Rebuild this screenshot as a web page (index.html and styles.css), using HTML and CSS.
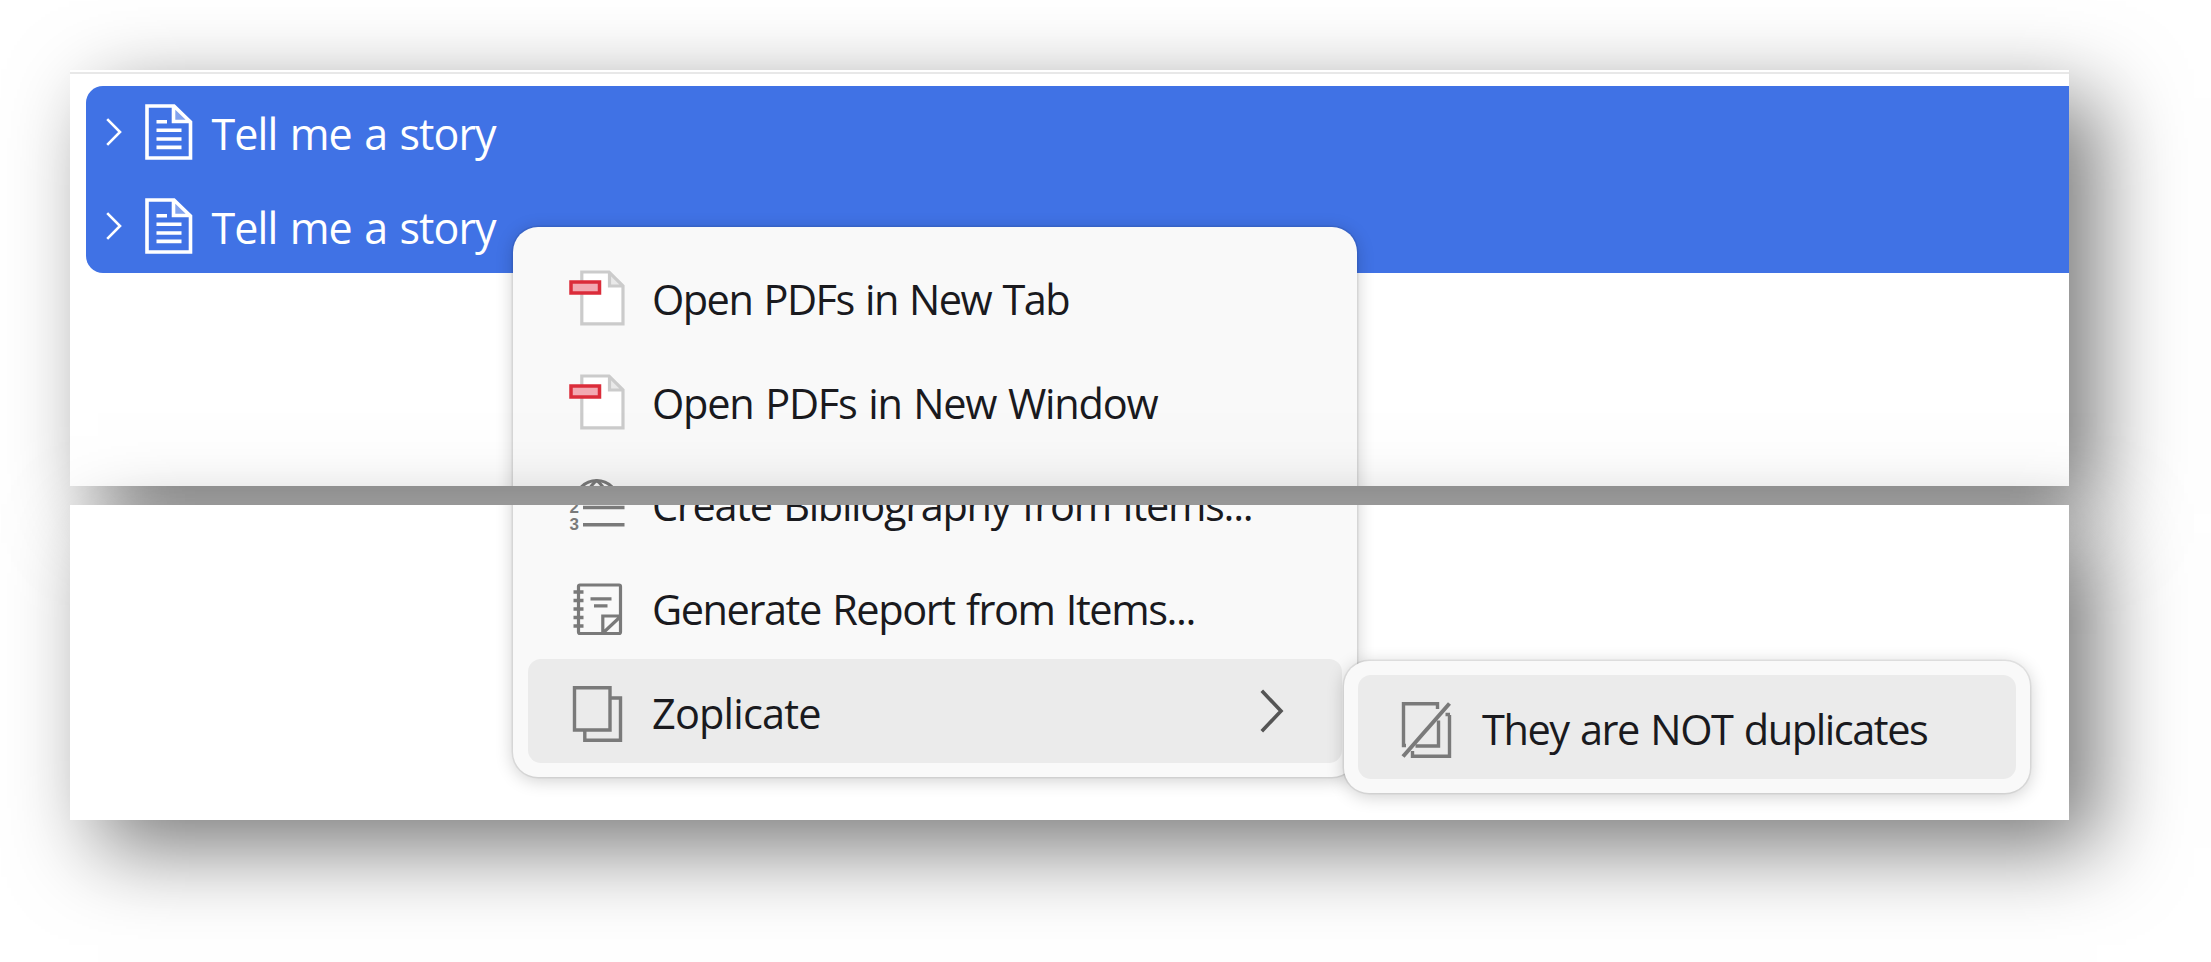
FILE: index.html
```html
<!DOCTYPE html>
<html lang="en">
<head>
<meta charset="utf-8">
<title>Zoplicate menu</title>
<link rel="stylesheet" href="styles.css">
</head>
<body>
<svg class="defs" aria-hidden="true">
  <symbol id="doc" viewBox="0 0 48 56">
    <path d="M28 2 L28 17.500 H45.500 Z" fill="#fff" fill-opacity=".35"/>
    <path d="M2 2 H29 L45.500 18 V54 H2 Z M28.500 2 V17.500 H45" fill="none" stroke="#fff" stroke-width="3.600"/>
    <path d="M11.500 17.800 H22 M11.500 26.200 H36.500 M11.500 35 H36.500 M11.500 43.400 H36.500" stroke="#fff" stroke-width="3.600"/>
  </symbol>
  <symbol id="twisty" viewBox="0 0 16 28">
    <path d="M1.200 1.200 L14 14 L1.200 26.800" fill="none" stroke="#fff" stroke-width="2.600"/>
  </symbol>
  <symbol id="pdf" viewBox="0 0 56 56">
    <path d="M12.800 2 H40 L54 15.800 V53.800 H12.800 Z" fill="#fff"/>
    <path d="M40 2 V16 H54 Z" fill="#e9e9e9"/>
    <path d="M12.800 2 H40 L54 15.800 V53.800 H12.800 Z M40.500 2 V16 H54" fill="none" stroke="#cbcbcb" stroke-width="3.200"/>
    <rect x="2" y="12" width="28.500" height="11" fill="#f2a9b2" stroke="#db2c3a" stroke-width="3.500"/>
  </symbol>
</svg>

<main class="shots">
  <section class="panel panel-top">
    <div class="selection">
      <div class="entry"><svg class="twisty"><use href="#twisty"/></svg><svg class="doc"><use href="#doc"/></svg><span class="label t-story">Tell me a story</span></div>
      <div class="entry"><svg class="twisty"><use href="#twisty"/></svg><svg class="doc"><use href="#doc"/></svg><span class="label t-story">Tell me a story</span></div>
    </div>
    <div class="menu menu-upper">
      <div class="item"><svg class="icon"><use href="#pdf"/></svg><span class="label t-tab">Open PDFs in New Tab</span></div>
      <div class="item"><svg class="icon"><use href="#pdf"/></svg><span class="label t-window">Open PDFs in New Window</span></div>
      <div class="item">
        <svg class="icon icon-bib" viewBox="0 0 56 56" fill="none" stroke="#7a7a7a" stroke-width="3.200">
          <circle cx="27.700" cy="25" r="21.500"/>
          <path d="M27.700 3.500 C20 9 18 17 18 25 M27.700 3.500 C35.500 9 37.500 17 37.500 25"/>
        </svg>
      </div>
    </div>
  </section>
  <section class="panel panel-bottom">
    <div class="menu menu-lower">
      <div class="item">
        <svg class="icon icon-list" viewBox="0 0 56 56">
          <path d="M14 30.500 H55.500 M14 47.800 H55.500" stroke="#7a7a7a" stroke-width="3.500"/>
          <text x="0.500" y="35.500" class="num">2</text>
          <text x="0.500" y="52.800" class="num">3</text>
        </svg>
        <span class="label t-bib">Create Bibliography from Items...</span>
      </div>
      <div class="item">
        <svg class="icon icon-report" viewBox="0 0 56 56" fill="none" stroke="#7a7a7a" stroke-width="3.200">
          <rect x="9.500" y="4" width="42" height="48.500" rx="1.500"/>
          <path d="M21.500 17.800 H42.500 M25 24.800 H38.500"/>
          <path d="M33.800 52 V35 H51 M34.500 51.500 L51 36"/>
          <path d="M4.500 11 H14.500 M4.500 19.500 H14.500 M4.500 28 H14.500 M4.500 36.500 H14.500 M4.500 45 H14.500" stroke-width="3.400"/>
        </svg>
        <span class="label t-report">Generate Report from Items...</span>
      </div>
      <div class="item active">
        <svg class="icon" viewBox="0 0 56 56">
          <path d="M5.500 1.800 H41 V44 H5.500 Z M41 12 H51.500 V54.200 H15.800 V44" fill="none" stroke="#7a7a7a" stroke-width="3.400"/>
        </svg>
        <span class="label t-zop">Zoplicate</span>
        <svg class="arrow" viewBox="0 0 24 44"><path d="M1.800 1.800 L21 22 L1.800 42.200" fill="none" stroke="#555" stroke-width="3.600"/></svg>
      </div>
    </div>
    <div class="menu submenu">
      <div class="item active">
        <svg class="icon" viewBox="0 0 56 56">
          <path d="M39.500 7 V1.800 H5.500 V43.500 H8 M17.500 44 H40.500 V18.500 M51.500 13 V54.200 H14.500 V49 M47.500 12.500 H52" fill="none" stroke="#7a7a7a" stroke-width="3.400"/>
          <path d="M5 54.500 L51.500 1.500" stroke="#7a7a7a" stroke-width="4"/>
        </svg>
        <span class="label t-not">They are NOT duplicates</span>
      </div>
    </div>
  </section>
</main>
</body>
</html>
```
FILE: styles.css
```css
* { box-sizing: border-box; }
body {
  margin: 0;
  width: 2211px;
  height: 962px;
  overflow: hidden;
  background: #fff;
  font-family: "Open Sans", "Noto Sans", sans-serif;
  font-size: 41.5px;
  color: #1a1a1e;
}
.defs { position: absolute; width: 0; height: 0; }
.num { font: bold 17px "Liberation Sans", sans-serif; fill: #7a7a7a; letter-spacing: 0; word-spacing: 0; }
.shots {
  display: flex;
  flex-direction: column;
  gap: 19px;
  padding: 70px 142px 0 70px;
}
.panel {
  position: relative;
  overflow: hidden;
  background: #fff;
  box-shadow: 28px 28px 80px rgba(0, 0, 0, .53);
}
.panel-top { height: 416px; padding-top: 2px; }
.panel-top::before { content: ""; display: block; height: 2px; background: #e8e8e8; }
.panel-bottom { height: 315px; }
.selection {
  margin: 11.5px 0 0 15.5px;
  background: #4072e5;
  border-radius: 17px 0 0 17px;
  color: #fff;
}
.entry {
  display: flex;
  align-items: center;
  height: 93.5px;
  padding-left: 20px;
  white-space: nowrap;
}
.twisty { width: 16px; height: 28px; margin-right: 23px; }
.doc { width: 48px; height: 56px; margin-right: 19px; }
.menu {
  position: absolute;
  left: 443px;
  width: 844px;
  background: #f9f9f9;
  border-radius: 25px;
  padding: 14px 15px 14px 14.5px;
  box-shadow: 0 0 0 1.5px rgba(0, 0, 0, .07), 0 3px 18px rgba(0, 0, 0, .2);
}
.menu-upper { top: 157px; padding-top: 18px; }
.menu-lower { bottom: 43px; }
.submenu { left: 1274px; top: 156px; width: 686px; padding: 14px; }
.item {
  display: flex;
  align-items: center;
  height: 104px;
  padding-left: 41.5px;
  border-radius: 13px;
  white-space: nowrap;
}
.submenu .item { padding-left: 40px; }
.active { background: #ebebeb; }
.icon { flex: none; width: 56px; height: 56px; margin: 2px 27px 0 0; }
.icon-bib { margin-top: 0; }
.icon-list { margin-top: 4px; }
.icon-report { margin-top: 3px; }
.active .icon { margin-top: 6px; }
.submenu .icon { margin-right: 28px; }
.arrow { width: 24px; height: 44px; margin-left: auto; margin-right: 58px; }
.label { line-height: 56px; padding-top: 4px; word-spacing: 2px; }
.t-story { font-size: 43px; letter-spacing: -.9px; }
.t-tab { letter-spacing: -1.53px; }
.t-window { letter-spacing: -1.21px; }
.t-bib { letter-spacing: -1.31px; }
.t-report { letter-spacing: -1.44px; }
.t-zop { letter-spacing: -.83px; }
.t-not { letter-spacing: -1.44px; }
```
